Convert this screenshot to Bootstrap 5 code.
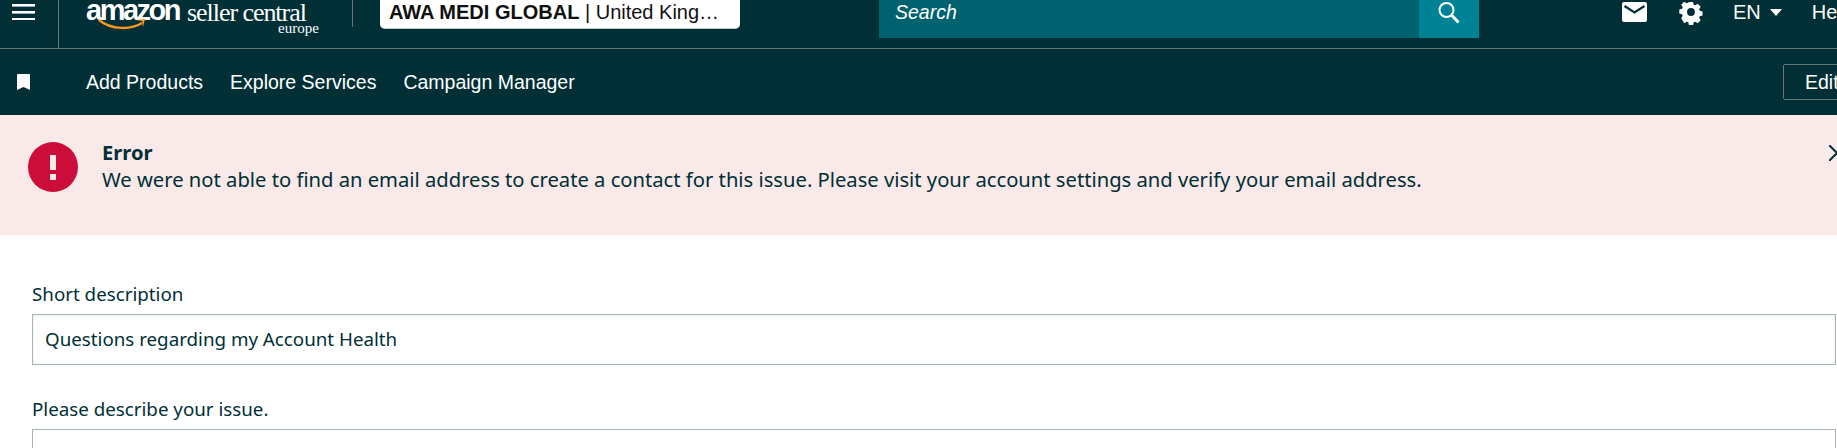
<!DOCTYPE html>
<html lang="en"><head><meta charset="utf-8"><title>Seller Central</title>
<link href="https://cdn.jsdelivr.net/npm/bootstrap@5.3.0/dist/css/bootstrap.min.css" rel="stylesheet">
<style>
html,body{height:448px;overflow:hidden;background:#fff}
body{font-family:"Noto Sans",sans-serif;color:#002f36;font-size:20.2px}
.top-strip{height:49px;background:#002f36;border-bottom:1px solid #6c7778;color:#fff;overflow:hidden;font-family:"Liberation Sans",sans-serif;white-space:nowrap}
.menu-cell{flex:none;width:59px;height:48px;border-right:1px solid #6c7778;padding:4px 0 0 12px}
.logo-cell{flex:none;width:294px;height:27px;border-right:1px solid #6c7778;padding-left:27px;margin-right:27px;position:relative}
.logo-amazon{font:700 29px/18px "Liberation Sans",sans-serif;letter-spacing:-2.500px;position:relative;top:-2px}
.logo-seller{font:400 26px/18px "Liberation Serif",serif;letter-spacing:-1.050px;margin-left:8px;position:relative;top:-1px}
.logo-europe{position:absolute;left:219px;top:21px;font:400 15px/14px "Liberation Serif",serif}
.logo-smile{position:absolute;left:39px;top:19px}
.store-pill{flex:none;width:360px;height:29px;background:#fff;border-radius:0 0 5px 5px;border-bottom:1px solid #c4cbcb;color:#0f1111;font-size:20px;line-height:25px;padding:0 9px;overflow:hidden}
.search-field{flex:none;width:540px;height:38px;background:#00616f;font-style:italic;font-size:19.5px;line-height:24px;padding:0 16px;margin-left:139px}
.search-go{flex:none;width:60px;height:38px;background:#008296;padding:2px 0 0 19px}
.icon-mail{flex:none;margin:2px 0 0 143px}
.icon-gear{flex:none;margin:0 0 0 32px}
.lang-text{flex:none;margin-left:30px;font-size:20px;line-height:24px}
.lang-caret{flex:none;margin:9px 0 0 9px}
.help-text{flex:none;margin-left:30px;font-size:20px;line-height:24px}
.sub-strip{height:66px;background:#002f36;color:#fff;font-family:"Liberation Sans",sans-serif;font-size:19.5px;white-space:nowrap;overflow:hidden;padding:2px 0 0 17px}
.sub-strip>svg{margin-top:-2px}
.sub-link{color:#fff;text-decoration:none;margin-left:27px}
.sub-link.first-link{margin-left:56px}
.edit-box{flex:none;width:80px;height:36px;border:1px solid #6c7778;border-radius:2px;padding:3px 21px;margin-left:auto;margin-right:-26px;margin-top:-3px}
.err-band{height:120px;background:#f9e9e9;padding:27px 0 0 28px;position:relative;overflow:hidden}
.err-copy{margin-left:24px;margin-top:-3px}
.err-title{font-weight:700;line-height:26px}
.err-body{line-height:28px}
.err-close{position:absolute;right:0;top:30px}
.form-area{padding:48px 1px 0 32px}
.field-label{font-size:18.75px;line-height:22px;margin-bottom:9px}
.field-input{height:51px;border:1px solid #a6b5b5;box-shadow:inset 0 1px 3px rgba(0,0,0,.08);padding:11px 12px;font-size:18.75px;line-height:26px}
.second-label{margin-top:33px}
.second-input{height:40px;box-shadow:none}
</style></head>
<body>
<div class="top-strip d-flex align-items-start">
  <div class="menu-cell"><svg width="23" height="16" viewBox="0 0 23 16" fill="#fff" class="d-block"><rect width="23" height="2.600" y="0"/><rect width="23" height="2.600" y="7"/><rect width="23" height="2.600" y="14"/></svg></div>
  <div class="logo-cell"><span class="logo-amazon">amazon</span><span class="logo-seller">seller central</span><span class="logo-europe">europe</span>
    <svg class="logo-smile" width="48" height="11" viewBox="0 0 48 11"><path d="M1 1c12 10 32 10 43 3" fill="none" stroke="#f7981d" stroke-width="2.400"/><path d="M38 1l9-1-2 8-1-6z" fill="#f7981d"/></svg></div>
  <div class="store-pill"><b>AWA MEDI GLOBAL</b> | United King…</div>
  <div class="search-field">Search</div>
  <div class="search-go"><svg class="d-block" width="22" height="22" viewBox="0 0 22 22"><circle cx="8.500" cy="8" r="7" fill="none" stroke="#fff" stroke-width="2"/><path d="M13.500 13l7 7.500" stroke="#fff" stroke-width="3"/></svg></div>
  <svg class="icon-mail" width="25" height="20" viewBox="0 0 25 20"><rect width="25" height="20" rx="2" fill="#fff"/><path d="M2.500 4l10 6.500 10-6.500" fill="none" stroke="#002f36" stroke-width="2.200"/></svg>
  <svg class="icon-gear" width="24" height="25" viewBox="0 0 24 24"><path fill="#fff" fill-rule="evenodd" d="M9.500 0h5l.7 3.300 1.900.8 2.900-1.800 3.500 3.500-1.800 2.900.8 1.900 3.300.7v5l-3.300.7-.8 1.900 1.800 2.900-3.500 3.500-2.900-1.800-1.900.8-.7 3.300h-5l-.7-3.300-1.900-.8-2.900 1.800L.4 19.400l1.800-2.900-.8-1.900L-1.900 13.900v-5l3.300-.7.8-1.900L.4 3.400 3.900-.1l2.900 1.800 1.900-.8zM12 7.300a4.700 4.700 0 1 0 0 9.400 4.700 4.700 0 0 0 0-9.400z" transform="translate(1.900 1.400) scale(.84)"/></svg>
  <div class="lang-text">EN</div>
  <svg class="lang-caret" width="12" height="7" viewBox="0 0 12 7"><path d="M0 0h12L6 7z" fill="#fff"/></svg>
  <div class="help-text">Help</div>
</div>
<div class="sub-strip d-flex align-items-center">
  <svg width="13" height="16" viewBox="0 0 13 16" class="flex-none"><path d="M1 0h11a1 1 0 0 1 1 1v15l-6.500-3L0 16V1a1 1 0 0 1 1-1z" fill="#fff"/></svg>
  <a class="sub-link first-link" href="#">Add Products</a>
  <a class="sub-link" href="#">Explore Services</a>
  <a class="sub-link" href="#">Campaign Manager</a>
  <div class="edit-box">Edit</div>
</div>
<div class="err-band d-flex align-items-start">
  <svg width="50" height="50" viewBox="0 0 50 50" class="flex-none"><circle cx="25" cy="25" r="25" fill="#cc0c39"/><rect x="22" y="13" width="6" height="15" fill="#f9e9e9"/><rect x="22" y="32" width="6" height="6" fill="#f9e9e9"/></svg>
  <div class="err-copy"><div class="err-title">Error</div><div class="err-body">We were not able to find an email address to create a contact for this issue. Please visit your account settings and verify your email address.</div></div>
  <svg class="err-close" width="8" height="16" viewBox="0 0 8 16"><path d="M0 0l8 8-8 8" fill="none" stroke="#002f36" stroke-width="2"/></svg>
</div>
<div class="form-area">
  <div class="field-label">Short description</div>
  <div class="field-input">Questions regarding my Account Health</div>
  <div class="field-label second-label">Please describe your issue.</div>
  <div class="field-input second-input"></div>
</div>
</body></html>
